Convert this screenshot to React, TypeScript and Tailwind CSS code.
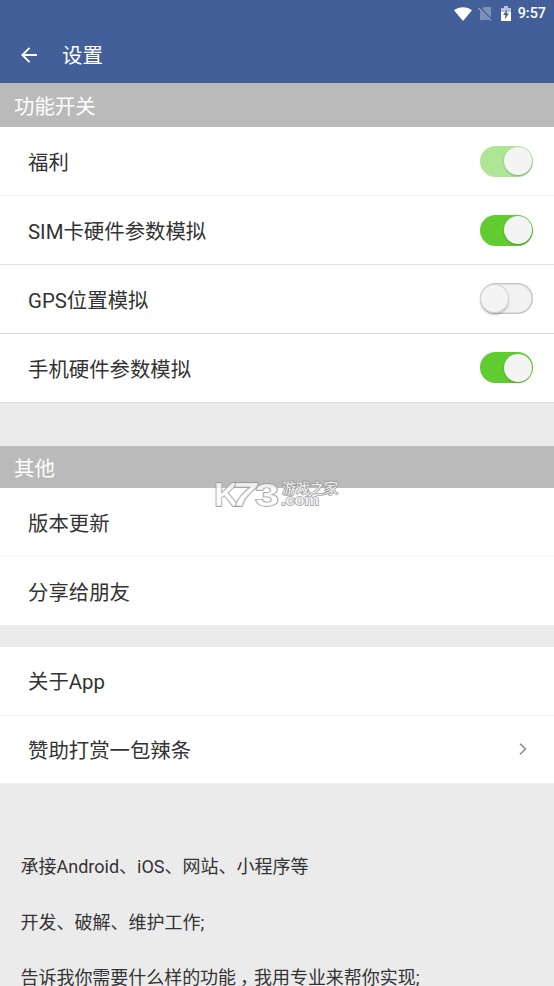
type SwitchState = 'on' | 'off' | 'muted';

const trackStyles: Record<SwitchState, string> = {
  on: 'bg-[#60cc2f] justify-end pr-px',
  muted: 'bg-[#aee695] justify-end pr-px',
  off: 'bg-[#f2f2f2] justify-start shadow-[inset_0_0_0_1.5px_#c6c6c6]',
};

const knobStyles: Record<SwitchState, string> = {
  on: 'h-7 w-7 shadow-[0_1px_2px_rgba(0,0,0,0.25)]',
  muted: 'h-7 w-7 shadow-[0_1px_2px_rgba(0,0,0,0.25)]',
  off: 'h-[29px] w-[29px] shadow-[0_2px_2px_rgba(0,0,0,0.2),inset_0_0_0_1px_#cfcfcf]',
};

function Switch({ state, raised }: { state: SwitchState; raised?: boolean }) {
  return (
    <span className={`flex h-[31px] w-[53px] items-center rounded-full ${raised ? 'mb-px' : ''} ${trackStyles[state]}`}>
      <span className={`rounded-full bg-[#f4f4f4] ${knobStyles[state]}`} />
    </span>
  );
}

function Row({ label, state, raised, chevron, line = 'border-[#f0f0f0]', height = 'h-[69px]', shift = 'mt-1' }: {
  label: string; state?: SwitchState; raised?: boolean; chevron?: boolean; line?: string; height?: string; shift?: string;
}) {
  return (
    <div className={`flex items-center justify-between border-b bg-white pr-[21px] pl-7 ${height} ${line}`}>
      <span className={`text-[20.4px] leading-7 ${shift}`}>{label}</span>
      {state && <Switch state={state} raised={raised} />}
      {chevron && (
        <svg className="mr-[6px] mb-px h-3 w-2" viewBox="0 0 8 12" fill="none" stroke="#858585" strokeWidth="1.4">
          <path d="M1 .8 6.5 6 1 11.2" />
        </svg>
      )}
    </div>
  );
}

function SectionTitle({ title, height }: { title: string; height: string }) {
  return (
    <h2 className={`flex items-center bg-[#bababa] pl-[14px] text-[20.4px] leading-7 text-white ${height}`}>
      <span className="mt-1">{title}</span>
    </h2>
  );
}

function StatusBar() {
  return (
    <div className="flex h-[27px] items-center justify-end pr-2 text-white">
      <svg className="h-[14px] w-[18px]" viewBox="0 0 18 14" fill="#fff">
        <path d="M0 3.2C5-.9 13-.9 18 3.2L9 14Z" />
      </svg>
      <svg className="ml-[6px] h-[15px] w-[14px]" viewBox="0 0 14 15">
        <path d="M6 1H13V14H2V5Z" fill="#7d90b9" />
        <path d="M.5 1 13.5 14.5" stroke="#435f99" strokeWidth="3" />
        <path d="M.5 2 13 14.5" stroke="#94a4c6" strokeWidth="1.2" />
      </svg>
      <svg className="ml-[9px] h-[15px] w-[10px]" viewBox="0 0 10 15">
        <path d="M3 0H7V2H10V15H0V2H3Z" fill="#fff" />
        <path d="M3 0H7V2H10V6H0V2H3Z" fill="#b7c2d9" />
        <path d="M6.2 3.5 2 9H4.4L3.8 13.2 8 7.6H5.6Z" fill="#435f99" />
      </svg>
      <span className="mt-[2px] ml-[7px] text-[14.4px] leading-none font-medium">9:57</span>
    </div>
  );
}

function Watermark() {
  return (
    <svg
      className="absolute top-[478px] left-[212px] h-[32px] w-[130px]"
      viewBox="0 0 130 32"
      fill="#fff"
      fillOpacity=".8"
      stroke="#999"
      paintOrder="stroke"
      strokeWidth="1.3"
      fontFamily="'Liberation Sans', 'Noto Sans CJK SC', sans-serif"
      fontWeight="700"
    >
      <text x="2" y="27.5" fontSize="33" textLength="25" lengthAdjust="spacingAndGlyphs">K</text>
      <text x="20" y="27.5" fontSize="33" fontStyle="italic" textLength="24" lengthAdjust="spacingAndGlyphs">7</text>
      <text x="43" y="27.5" fontSize="32" textLength="24" lengthAdjust="spacingAndGlyphs">3</text>
      <text x="70" y="14.5" fontSize="13.5" textLength="56" lengthAdjust="spacingAndGlyphs" fontWeight="500">游戏之家</text>
      <text x="69" y="27" fontSize="15" textLength="38" lengthAdjust="spacingAndGlyphs">.com</text>
    </svg>
  );
}

export default function App() {
  return (
    <main className="relative h-[986px] w-[554px] overflow-hidden bg-[#ebebeb] font-[Roboto,'Noto_Sans_CJK_SC',sans-serif] text-[#333]">
      <header className="h-[83px] bg-[#435f99]">
        <StatusBar />
        <div className="flex h-14 items-center pl-[21px] text-white">
          <svg className="h-4 w-4" viewBox="0 0 16 16" fill="none" stroke="currentColor" strokeWidth="1.9">
            <path d="M16 8H1.5M8.5 .8 1.3 8 8.5 15.2" />
          </svg>
          <h1 className="mt-[2px] ml-[25px] text-[20.4px] leading-7">设置</h1>
        </div>
      </header>

      <SectionTitle title="功能开关" height="h-11" />
      <Row label="福利" state="muted" />
      <Row label="SIM卡硬件参数模拟" state="on" line="border-[#e3e3e3]" />
      <Row label="GPS位置模拟" state="off" raised line="border-[#d9d9d9]" />
      <Row label="手机硬件参数模拟" state="on" raised line="border-[#dcdcdc]" />

      <div className="mt-[43px]">
        <SectionTitle title="其他" height="h-[42px]" />
        <Row label="版本更新" line="border-[#f7f7f7]" />
        <Row label="分享给朋友" />
      </div>

      <div className="mt-[21px]">
        <Row label="关于App" shift="mt-[2px]" />
        <Row label="赞助打赏一包辣条" chevron height="h-[68px]" shift="mt-[2px]" />
      </div>

      <div className="mt-[55px] pl-[20.5px] text-[18px] leading-[55.5px] whitespace-nowrap">
        <p>承接Android、iOS、网站、小程序等</p>
        <p>开发、破解、维护工作;</p>
        <p className="tracking-[-0.04px]">
          告诉我你需要什么样的功能<span className="mr-[-4px] pl-1">，</span>我用专业来帮你实现;
        </p>
      </div>

      <Watermark />
    </main>
  );
}
